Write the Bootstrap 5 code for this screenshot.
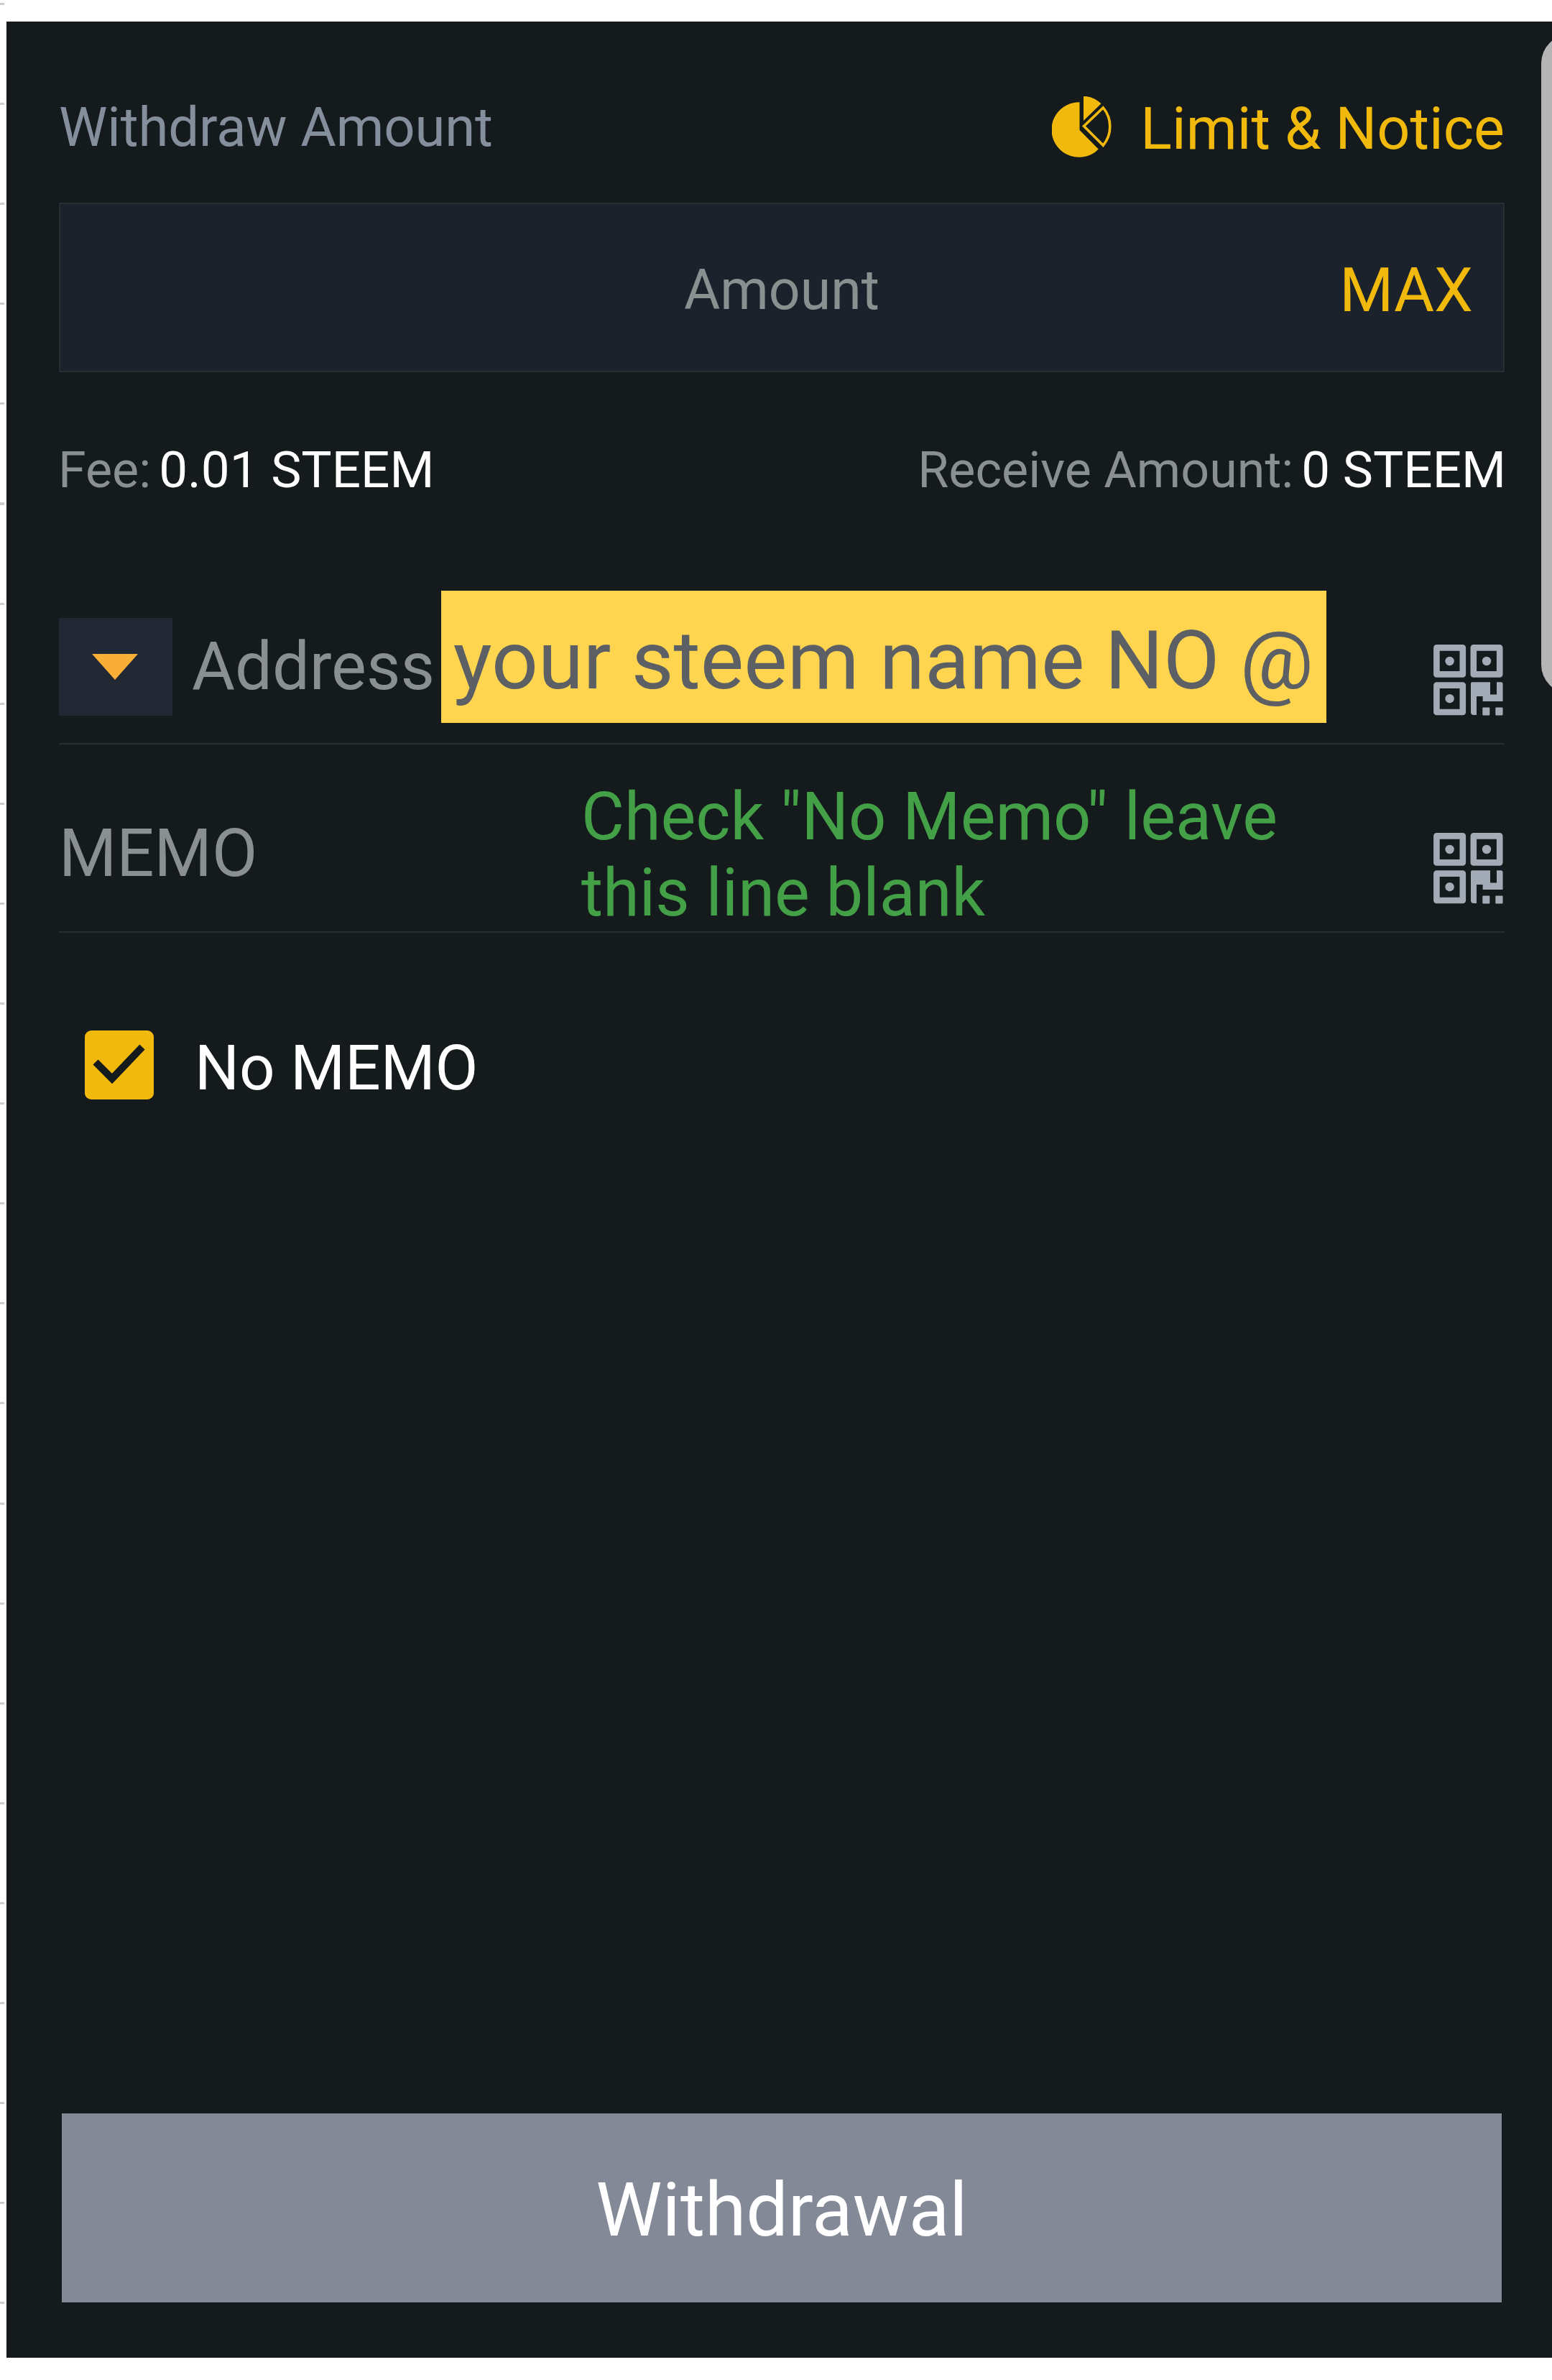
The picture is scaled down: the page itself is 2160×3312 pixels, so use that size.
<!DOCTYPE html>
<html lang="en">

<head>
  <meta charset="UTF-8">
  <meta name="viewport" content="width=device-width, initial-scale=1.0">
  <title>Withdraw STEEM</title>
  <link href="https://cdn.jsdelivr.net/npm/bootstrap@5.3.3/dist/css/bootstrap.min.css" rel="stylesheet">
  <style>
    body {
      font-family: Roboto, "Liberation Sans", sans-serif;
      line-height: 1.2;
      /* ruler ticks down the left edge */
      background: #fff repeating-linear-gradient(to bottom, #ccccca 0 3px, transparent 3px 139.1px) 0 4px / 6px 100% no-repeat;
    }

    .page {
      height: 3312px;
      padding: 30px 0 31px 9px;
    }

    .panel {
      background-color: #151b1d;
      padding: 0 66px 77px 73px;
    }

    .panel span,
    .panel label {
      white-space: nowrap;
    }

    .top-row {
      height: 252px;
      padding-top: 48px;
    }

    .title-text {
      color: #848e9c;
      font-size: 76px;
      letter-spacing: -0.1px;
      padding-bottom: 4px;
    }

    .notice-link {
      font-size: 81px;
      gap: 38px;
    }

    .notice-link svg {
      margin-bottom: 7px;
    }

    .gold {
      color: #f0b90b;
    }

    .muted {
      color: #8a8f8f;
    }

    .amount-box {
      height: 236px;
      padding: 8px 42px 0;
      background-color: #1b222c;
      border: 2px solid #242f35;
    }

    .amount-hint {
      font-size: 77px;
    }

    .max-btn {
      font-size: 86px;
    }

    .fee-row {
      height: 82px;
      margin: 95px -2px 0 -1px;
      font-size: 70px;
    }

    .fee-pair {
      gap: 11px;
    }

    .fee-value {
      font-size: 71px;
    }

    .line-row {
      border-bottom: 2px solid #242e33;
      font-size: 92px;
    }

    .address-row {
      height: 214px;
      margin-top: 127px;
    }

    .arrow-box {
      width: 158px;
      height: 136px;
      background-color: #212833;
    }

    .address-label {
      margin-left: 27px;
    }

    .address-note {
      width: 1232px;
      height: 184px;
      margin: 0 0 28px 9px;
      padding: 11px 0 0 17px;
      background-color: #ffd54f;
      color: #5c6064;
      font-size: 114px;
    }

    .qr {
      margin-right: 2px;
    }

    .address-row .qr {
      margin-top: 37px;
    }

    .memo-row {
      height: 262px;
      padding-top: 44px;
    }

    .memo-label {
      width: 727px;
    }

    .memo-note {
      margin-top: 3px;
      color: #43a047;
      line-height: 106px;
    }

    .memo-row .qr {
      margin-top: 41px;
    }

    .no-memo {
      height: 96px;
      margin-top: 136px;
      padding-left: 36px;
      gap: 57px;
      color: #fff;
      font-size: 87px;
    }

    .no-memo label {
      margin-top: 8px;
    }

    .withdraw-btn {
      height: 263px;
      margin: auto 4px 0;
      padding: 7px 0 0;
      background-color: #838996;
      color: #fff;
      font-size: 104px;
    }

    /* wider than what shows, the rest runs off the right edge */
    .scroll-thumb {
      top: 48px;
      right: -85px;
      width: 100px;
      height: 917px;
      border-radius: 40px;
      background-color: #b5b5b5;
    }
  </style>
</head>

<body class="overflow-hidden">
  <svg class="d-none">
    <symbol id="qr" viewBox="0 0 97 99">
      <g fill="none" stroke="#a3abb6" stroke-width="8.6" stroke-linejoin="round">
        <rect x="4.4" y="4.4" width="36.4" height="37" />
        <rect x="55.8" y="4.4" width="36.4" height="37" />
        <rect x="4.4" y="56.6" width="36.4" height="37.4" />
      </g>
      <g fill="#a3abb6">
        <circle cx="22.6" cy="23" r="6.2" />
        <circle cx="74" cy="23" r="6.2" />
        <circle cx="22.6" cy="75.2" r="6.2" />
        <path d="M54 52.3h25V69.5h9V52.3h6a2.5 2.5 0 0 1 2.5 2.5V79H68.600V72H60V98h-4a4 4 0 0 1-4-4V54.300a2 2 0 0 1 2-2z" />
        <rect x="68.3" y="87.5" width="10" height="11" rx="1" />
        <rect x="86.3" y="87.5" width="10.2" height="11" rx="1" />
      </g>
    </symbol>
  </svg>

  <div class="page d-flex position-relative overflow-hidden">
    <main class="panel flex-grow-1 d-flex flex-column">
      <div class="top-row d-flex justify-content-between align-items-center">
        <span class="title-text">Withdraw Amount</span>
        <div class="notice-link gold d-flex align-items-center">
          <svg width="85" height="85" viewBox="0 0 85 85" fill="#f0b90b">
            <path d="M38.5 8.2A38.3 38.3 0 1 0 64.8 73.6L38.5 47z" />
            <path d="M44 0A35 35 0 0 1 68.5 10.3L44 34z" />
            <path d="M44.5 41.500L71.3 15.8A41 41 0 0 1 71.3 68.3z" fill="none" stroke="#f0b90b" stroke-width="3.6" />
          </svg>
          <span>Limit &amp; Notice</span>
        </div>
      </div>

      <div class="amount-box d-flex align-items-center">
        <div class="col"></div>
        <span class="amount-hint muted">Amount</span>
        <div class="col text-end"><span class="max-btn gold">MAX</span></div>
      </div>

      <div class="fee-row d-flex justify-content-between align-items-center">
        <div class="fee-pair d-flex align-items-baseline">
          <span class="muted">Fee:</span>
          <span class="text-white fee-value">0.01 STEEM</span>
        </div>
        <div class="fee-pair d-flex align-items-baseline">
          <span class="muted">Receive Amount:</span>
          <span class="text-white fee-value">0 STEEM</span>
        </div>
      </div>

      <div class="line-row address-row d-flex align-items-center">
        <div class="arrow-box d-flex align-items-center justify-content-center">
          <svg width="66" height="36" viewBox="0 0 66 36"><path d="M0 0h64L32 36z" fill="#f9ae38" /></svg>
        </div>
        <span class="address-label muted">Address</span>
        <div class="address-note d-flex align-items-center"><span>your steem name NO @</span></div>
        <svg class="qr ms-auto" width="97" height="99"><use href="#qr" /></svg>
      </div>

      <div class="line-row memo-row d-flex align-items-center">
        <span class="memo-label muted">MEMO</span>
        <div class="memo-note"><span>Check "No Memo" leave</span><br><span>this line blank</span></div>
        <svg class="qr ms-auto" width="97" height="99"><use href="#qr" /></svg>
      </div>

      <div class="no-memo d-flex align-items-center">
        <svg width="96" height="96" viewBox="0 0 96 96">
          <rect width="96" height="96" rx="9" fill="#f0b90b" />
          <path d="M15 44L38 67L80 23" fill="none" stroke="#151b1d" stroke-width="10" />
        </svg>
        <label>No MEMO</label>
      </div>

      <button class="withdraw-btn btn rounded-0 border-0"><span>Withdrawal</span></button>
    </main>
    <div class="scroll-thumb position-absolute"></div>
  </div>
  <script src="https://cdn.jsdelivr.net/npm/bootstrap@5.3.3/dist/js/bootstrap.bundle.min.js"></script>
</body>

</html>
